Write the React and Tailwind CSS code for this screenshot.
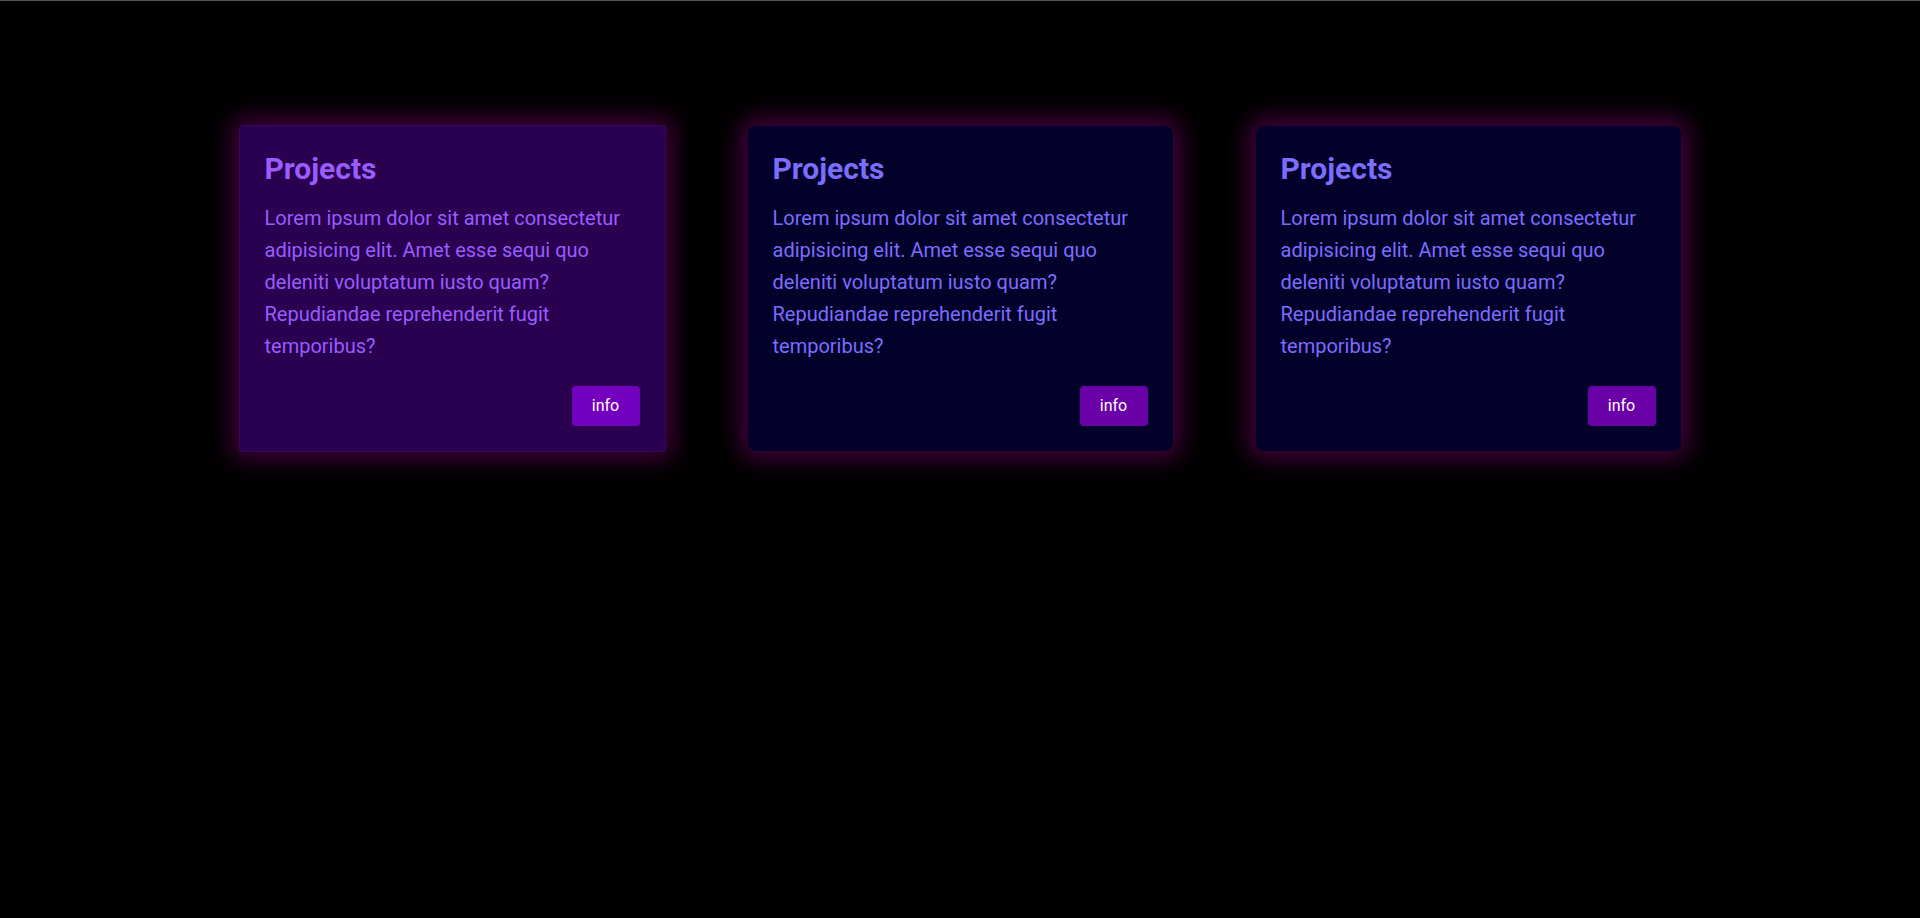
import React from 'react';

const cards = [
  { id: 1, active: true },
  { id: 2, active: false },
  { id: 3, active: false },
];

const text =
  'Lorem ipsum dolor sit amet consectetur adipisicing elit. Amet esse sequi quo deleniti voluptatum iusto quam? Repudiandae reprehenderit fugit temporibus?';

const Card = ({ active }) => {
  return (
    <div
      className={
        active
          ? 'flex flex-col w-[425px] h-[325px] p-[25px] bg-[#2a0050] ring-1 ring-[#36075a] rounded-[3px] shadow-[0_0_24px_8px_rgba(95,0,85,0.7)]'
          : 'flex flex-col w-[425px] h-[325px] p-[25px] bg-[#03002a] rounded-lg shadow-[0_0_24px_8px_rgba(95,0,85,0.7)]'
      }
    >
      <h2
        className={
          active
            ? 'text-[30px] leading-9 font-bold text-[#9a5cff]'
            : 'text-[30px] leading-9 font-bold text-[#7c6dff]'
        }
      >
        Projects
      </h2>
      <p
        className={
          active
            ? 'mt-[15px] text-xl leading-8 text-[#9a5cff]'
            : 'mt-[15px] text-xl leading-8 text-[#7c6dff]'
        }
      >
        {text}
      </p>
      <div className="flex justify-end mt-auto">
        <button
          className={
            active
              ? 'w-[68px] h-10 rounded-[4px] bg-[#7400bf] text-white text-base'
              : 'w-[68px] h-10 rounded-[4px] bg-[#6a00a8] text-white text-base'
          }
        >
          info
        </button>
      </div>
    </div>
  );
};

const App = () => {
  return (
    <div
      className="min-h-[918px] w-full bg-black border-t border-[#555555]"
      style={{ fontFamily: 'Roboto, "Noto Sans", sans-serif' }}
    >
      <div className="flex justify-center gap-[83px] pt-[125px]">
        {cards.map((c) => (
          <Card key={c.id} active={c.active} />
        ))}
      </div>
    </div>
  );
};

export default App;
